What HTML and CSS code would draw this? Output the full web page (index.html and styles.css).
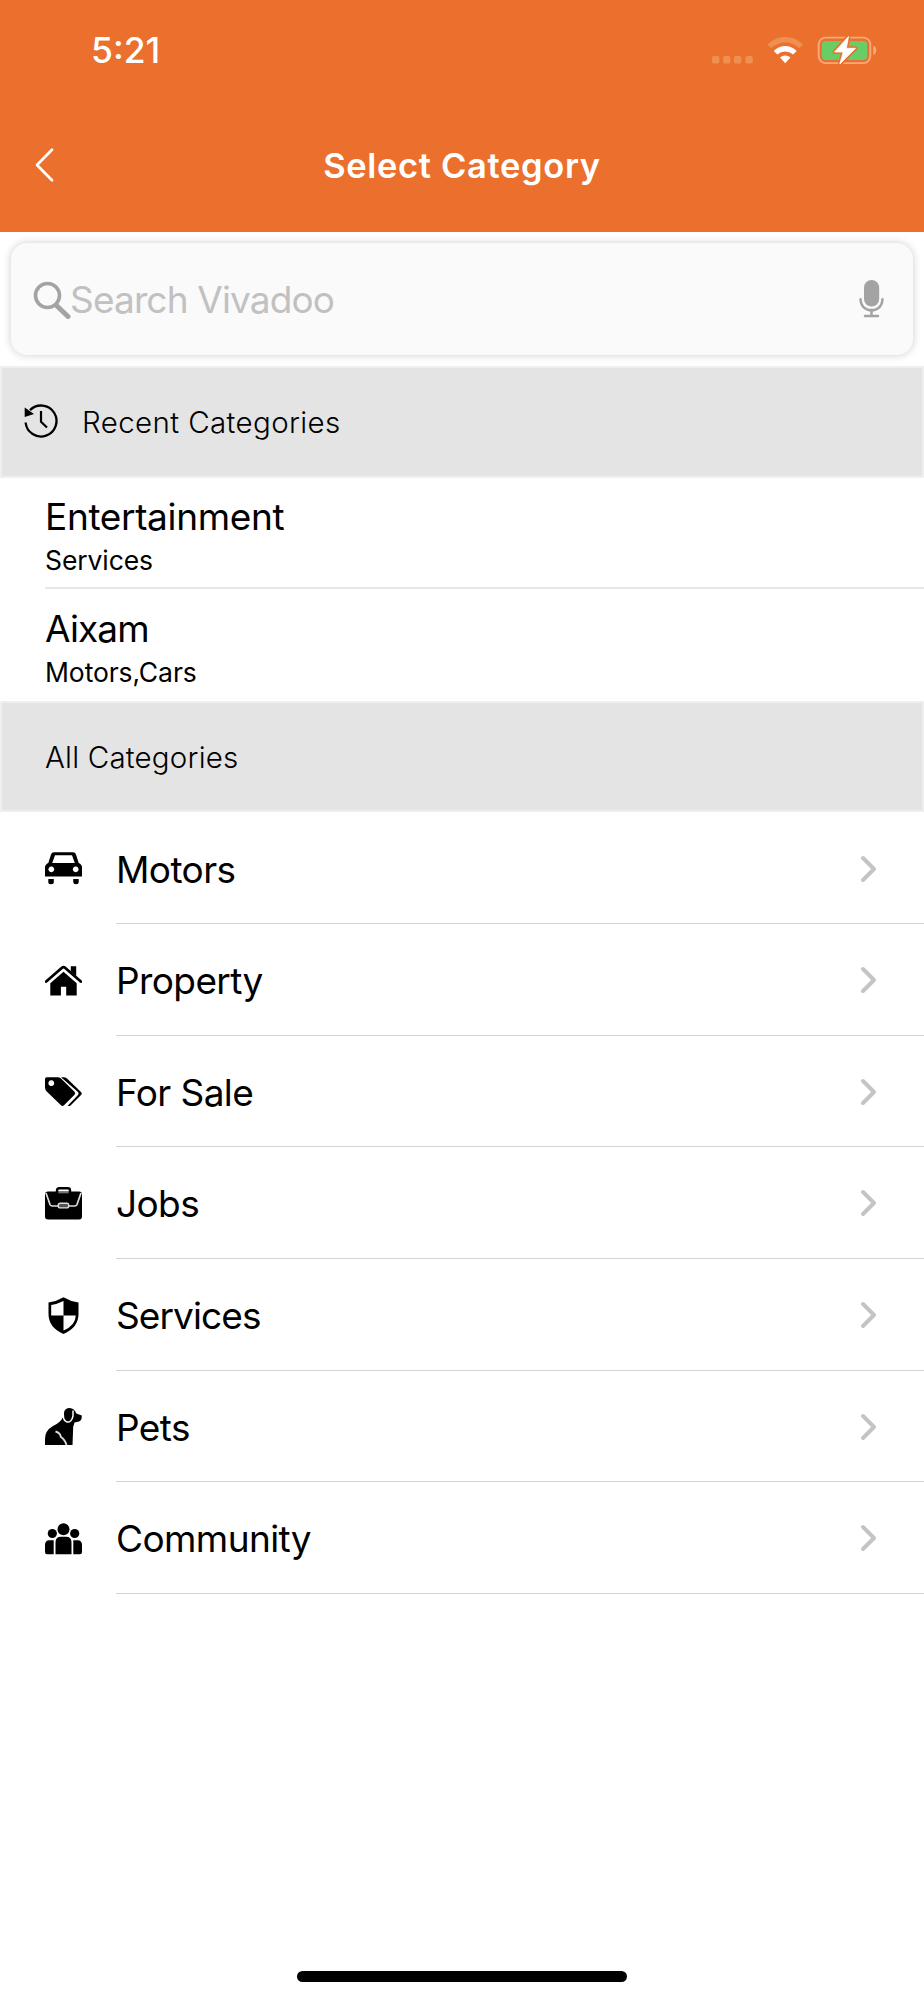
FILE: index.html
```html
<!DOCTYPE html>
<html lang="en">
<head>
<meta charset="utf-8">
<title>Select Category</title>
<link rel="stylesheet" href="styles.css">
</head>
<body>
<div class="screen">
  <header class="header">
    <div class="status">
      <span class="clock">5:21</span>
      <svg class="status-icons" width="166" height="30" viewBox="0 0 166 30">
        <g fill="#f09050"><rect x="0" y="20" width="7.4" height="7.4" rx="2"/><rect x="11" y="20" width="7.4" height="7.4" rx="2"/><rect x="22" y="20" width="7.4" height="7.4" rx="2"/><rect x="33.4" y="20" width="7.4" height="7.4" rx="2"/></g>
        <path d="M55.5 8.400Q63.500 1 73.200 1T91 8.400L87.400 12Q81 6.400 73.200 6.400T59 12Z" fill="#f09050"/>
        <path d="M61.800 15Q66.800 10 73.200 10T84.700 15L81.200 18.500Q77.500 15.500 73.200 15.500T65.300 18.500Z" fill="#fff"/>
        <path d="M68 21.500Q70.300 19.500 73.200 19.500T78.500 21.500L73.200 27.300Z" fill="#fff"/>
        <rect x="106.700" y="1.600" width="51.600" height="25.500" rx="7" fill="none" stroke="#f4aa7c" stroke-width="1.900"/>
        <rect x="109.900" y="4.900" width="45.300" height="19" rx="4" fill="#68cd67"/>
        <path d="M161.200 9.500Q164.300 11 164.300 14.300T161.200 19Z" fill="#f4aa7c"/>
        <path d="M136.500 .5L122.500 16H131.200L127.800 28L143.500 12.300H134.300Z" fill="#fff" stroke="#eb702d" stroke-width="4" stroke-linejoin="round"/>
        <path d="M136.500 .5L122.500 16H131.200L127.800 28L143.500 12.300H134.300Z" fill="#fff" stroke="#fff" stroke-width=".8" stroke-linejoin="round"/>
      </svg>
    </div>
    <div class="nav">
      <svg class="back" width="22" height="36" viewBox="0 0 22 36"><path d="M19 2.800L4 18L19 33.200" fill="none" stroke="#fff" stroke-width="2.700" stroke-linecap="round" stroke-linejoin="round"/></svg>
      <h1 class="title">Select Category</h1>
    </div>
  </header>

  <div class="search-wrap">
    <div class="search">
      <svg class="magnifier" width="38" height="38" viewBox="0 0 38 38"><g fill="none" stroke="#a3a3a3"><circle cx="14.500" cy="14.500" r="12" stroke-width="3.600"/><path d="M24 25L35 35.500" stroke-width="5" stroke-linecap="round"/></g></svg>
      <span class="placeholder">Search Vivadoo</span>
      <svg class="mic" width="25" height="38" viewBox="0 0 25 38"><rect x="5" y="0" width="15.200" height="26.500" rx="7.600" fill="#a3a3a3"/><path d="M1.600 19.300C1.600 34 23.400 34 23.400 19.300M12.500 30V36M6 36H19" fill="none" stroke="#a3a3a3" stroke-width="2.500" stroke-linecap="round"/></svg>
    </div>
  </div>

  <div class="section">
    <svg class="history" width="34" height="34" viewBox="0 0 34 34"><path d="M6 6.100A15.500 15.500 0 1 1 1.600 18.500" fill="none" stroke="#000" stroke-width="2.300"/><path d="M.7 3.500V13L10 10Z"/><path d="M17 7V17.800L23 23.500" fill="none" stroke="#000" stroke-width="2.200"/></svg>
    <span class="section-label recent">Recent Categories</span>
  </div>
  <div class="recent-row"><div class="recent-name ent">Entertainment</div><div class="recent-sub serv">Services</div></div>
  <div class="recent-row last"><div class="recent-name aix">Aixam</div><div class="recent-sub cars">Motors,Cars</div></div>
  <div class="section all"><span class="section-label">All Categories</span></div>

  <div class="row">
    <svg class="icon" viewBox="0 0 37 37"><path fill-rule="evenodd" d="M9 2.300H28Q30.300 2.300 31 4.500L33.700 13Q37 14.500 37 17.500V26.500H0V17.500Q0 14.500 3.300 13L6 4.500Q6.700 2.300 9 2.300ZM10 5.200L7.200 13H29.800L27 5.200ZM6.300 16.500A2.900 2.900 0 1 0 6.310 16.500ZM30.700 16.500A2.900 2.900 0 1 0 30.710 16.500Z"/><path d="M3.300 29H8.800V32Q8.800 34.200 6 34.200T3.300 32ZM28.200 29H33.700V32Q33.700 34.200 31 34.200T28.200 32Z"/></svg>
    <span class="label motors">Motors</span>
    <svg class="chevron" width="18" height="28" viewBox="0 0 18 28"><path d="M3 3L14 14L3 25"/></svg>
  </div>
  <div class="row">
    <svg class="icon" viewBox="0 0 37 37"><path d="M1.200 19.500L17 5.800Q18.500 4.500 20 5.800L35.800 19.500" fill="none" stroke="#000" stroke-width="2.800" stroke-linecap="round"/><path d="M25.800 4.200H31.200V14L25.800 9.300ZM18.500 9.800L31.700 21.200V33.500H21.200V24.800H15.900V33.500H5.300V21.200Z"/></svg>
    <span class="label property">Property</span>
    <svg class="chevron" width="18" height="28" viewBox="0 0 18 28"><path d="M3 3L14 14L3 25"/></svg>
  </div>
  <div class="row">
    <svg class="icon" viewBox="0 0 37 37"><path fill-rule="evenodd" d="M1.800 4.200H12.500Q14.500 4.200 16 5.500L29.500 18.800Q31 20.300 29.500 21.800L19 32.300Q17.500 33.600 16 32.200L2 18.800Q0 17 0 14.500V6Q0 4.200 1.800 4.200ZM6.300 7.300A2.900 2.900 0 1 0 6.310 7.300Z"/><path d="M16 4.200H18.500Q20.500 4.200 22 5.500L36 19Q37.500 20.500 36 22L25.500 32.500Q24.500 33.500 22.700 32.800L33 22Q34 20.500 33 19Z"/></svg>
    <span class="label sale">For Sale</span>
    <svg class="chevron" width="18" height="28" viewBox="0 0 18 28"><path d="M3 3L14 14L3 25"/></svg>
  </div>
  <div class="row">
    <svg class="icon" viewBox="0 0 37 37"><rect x="0" y="6.500" width="37" height="28" rx="3"/><path d="M12 8V5.500Q12 3.300 14.200 3.300H22.800Q25 3.300 25 5.500V8" fill="none" stroke="#000" stroke-width="2.400"/><path d="M13.300 7.700H23.700" stroke="#777" stroke-width="1.300"/><path d="M1 8L5 19.500Q5.600 21 7.500 21H13M36 8L32 19.500Q31.400 21 29.500 21H24" fill="none" stroke="#ddd" stroke-width="1.700"/><rect x="13.300" y="18.200" width="10.400" height="4.700" rx="2" fill="#555" stroke="#ddd" stroke-width="1.400"/></svg>
    <span class="label jobs">Jobs</span>
    <svg class="chevron" width="18" height="28" viewBox="0 0 18 28"><path d="M3 3L14 14L3 25"/></svg>
  </div>
  <div class="row">
    <svg class="icon" viewBox="0 0 37 37"><path fill-rule="evenodd" d="M18.500 .2Q25 4.200 33.500 5.500V17Q33.500 30.500 18.500 37Q3.500 30.500 3.500 17V5.500Q12 4.200 18.500 .2ZM18.500 4V18.500H6.200V8Q12.500 7 18.500 4ZM18.500 18.500H30.800Q30.500 28.500 18.500 33.500Z"/></svg>
    <span class="label services">Services</span>
    <svg class="chevron" width="18" height="28" viewBox="0 0 18 28"><path d="M3 3L14 14L3 25"/></svg>
  </div>
  <div class="row">
    <svg class="icon" viewBox="0 0 37 37"><path d="M18.300 9L18.800 4.500Q20 0 24.500 0Q29.500 .3 31.300 5.500L36.800 7.500Q37 12.500 34 13.500L29.500 14.500Q27.500 19 28 24L27.500 37H0V31Q0 22.500 8 18Q15 15 18.300 9Z"/><path d="M18.500 2Q17.300 12.500 21.500 13.800Q26.500 15 28 8V2.500" fill="none" stroke="#fff" stroke-width="1.500"/><path d="M10.500 23.500Q15.500 25 15.800 29Q20 31.500 21.500 37" fill="none" stroke="#ddd" stroke-width="1.900"/></svg>
    <span class="label pets">Pets</span>
    <svg class="chevron" width="18" height="28" viewBox="0 0 18 28"><path d="M3 3L14 14L3 25"/></svg>
  </div>
  <div class="row">
    <svg class="icon" viewBox="0 0 37 37"><circle cx="7.300" cy="13.500" r="4.600"/><circle cx="29.700" cy="13.500" r="4.600"/><circle cx="18.500" cy="9.200" r="6"/><path d="M10.500 34.300V22.500Q10.500 16.800 16 16.800H21Q26.500 16.800 26.500 22.500V34.300ZM8.700 34.300H2Q0 34.300 0 32V25Q0 20.300 4.500 20.300H8.700ZM28.300 34.300H35Q37 34.300 37 32V25Q37 20.300 32.500 20.300H28.300Z"/></svg>
    <span class="label community">Community</span>
    <svg class="chevron" width="18" height="28" viewBox="0 0 18 28"><path d="M3 3L14 14L3 25"/></svg>
  </div>
  <div class="home"></div>
</div>
</body>
</html>
```
FILE: styles.css
```css
* { box-sizing: border-box; }
body { margin: 0; background: #fff; font-family: Inter, "Liberation Sans", sans-serif; color: #000; }
.screen { width: 924px; height: 2000px; display: flex; flex-direction: column; overflow: hidden; white-space: nowrap; }
.header { height: 232px; flex: none; background: #eb702d; color: #fff; }
.status { height: 100px; display: flex; justify-content: space-between; padding: 36px 46px 0 91px; }
.clock { font-size: 35.500px; line-height: 30px; font-weight: 550; letter-spacing: 0; }
.status-icons { flex: none; }
.nav { height: 132px; display: grid; grid-template-columns: 60px 1fr 60px; align-items: center; padding: 0 0 2px 0; }
.back { margin: 0 0 0 33px; }
.title { margin: 1px 0 0; font-size: 34.500px; line-height: 40px; font-weight: 600; letter-spacing: .65px; text-align: center; }
.search-wrap { flex: none; height: 134px; padding: 11px 11px 11px; }
.search { height: 112px; border-radius: 16px; background: #fafafa; box-shadow: 0 0 8px rgba(0,0,0,.2); display: flex; align-items: center; padding: 0 29px 0 22px; }
.magnifier { flex: none; margin-top: 2px; }
.placeholder { flex: 1; font-size: 37px; line-height: 44px; color: #c1c1c1; margin: 2px 0 0 -1px; letter-spacing: -.85px; }
.mic { flex: none; }
.section { flex: none; height: 111.600px; background: #e4e4e4; border: 2px solid #eeefef; display: flex; align-items: center; padding: 0 22px; }
.section.all { padding-left: 43px; }
.section-label { font-size: 29.500px; font-weight: 300; line-height: 36px; letter-spacing: .2px; }
.section-label.recent { letter-spacing: .38px; }
.history { margin: -1px 24px 0 0; flex: none; overflow: visible; }
.recent-row { flex: none; height: 111.600px; margin-left: 45px; border-bottom: 2px solid #e7e7e7; padding-top: 17px; }
.recent-row.last { border-bottom-color: transparent; padding-top: 18px; }
.recent-name { font-size: 37px; line-height: 44px; }
.recent-name.ent { letter-spacing: -.35px; }
.recent-name.aix { letter-spacing: -.85px; }
.recent-sub { font-size: 26.500px; line-height: 32px; margin-top: 5px; letter-spacing: -.1px; }
.row { flex: none; height: 111.600px; display: flex; align-items: center; padding: 0 46px 0 45px; position: relative; top: .5px; background: linear-gradient(#d3d3d3, #d3d3d3) 116px 100% / 100% 1.300px no-repeat; }
.icon { width: 37px; height: 37px; flex: none; margin-right: 34px; filter: blur(.5px); }
.label { flex: 1; font-size: 37px; line-height: 44px; margin-top: 2px; letter-spacing: -.6px; }
.label.services { letter-spacing: -.9px; }
.chevron { flex: none; fill: none; stroke: #c4c4c6; stroke-width: 4; stroke-linecap: round; stroke-linejoin: round; }
.home { width: 330px; height: 11px; border-radius: 6px; background: #000; margin: auto auto 18px; flex: none; }
```
